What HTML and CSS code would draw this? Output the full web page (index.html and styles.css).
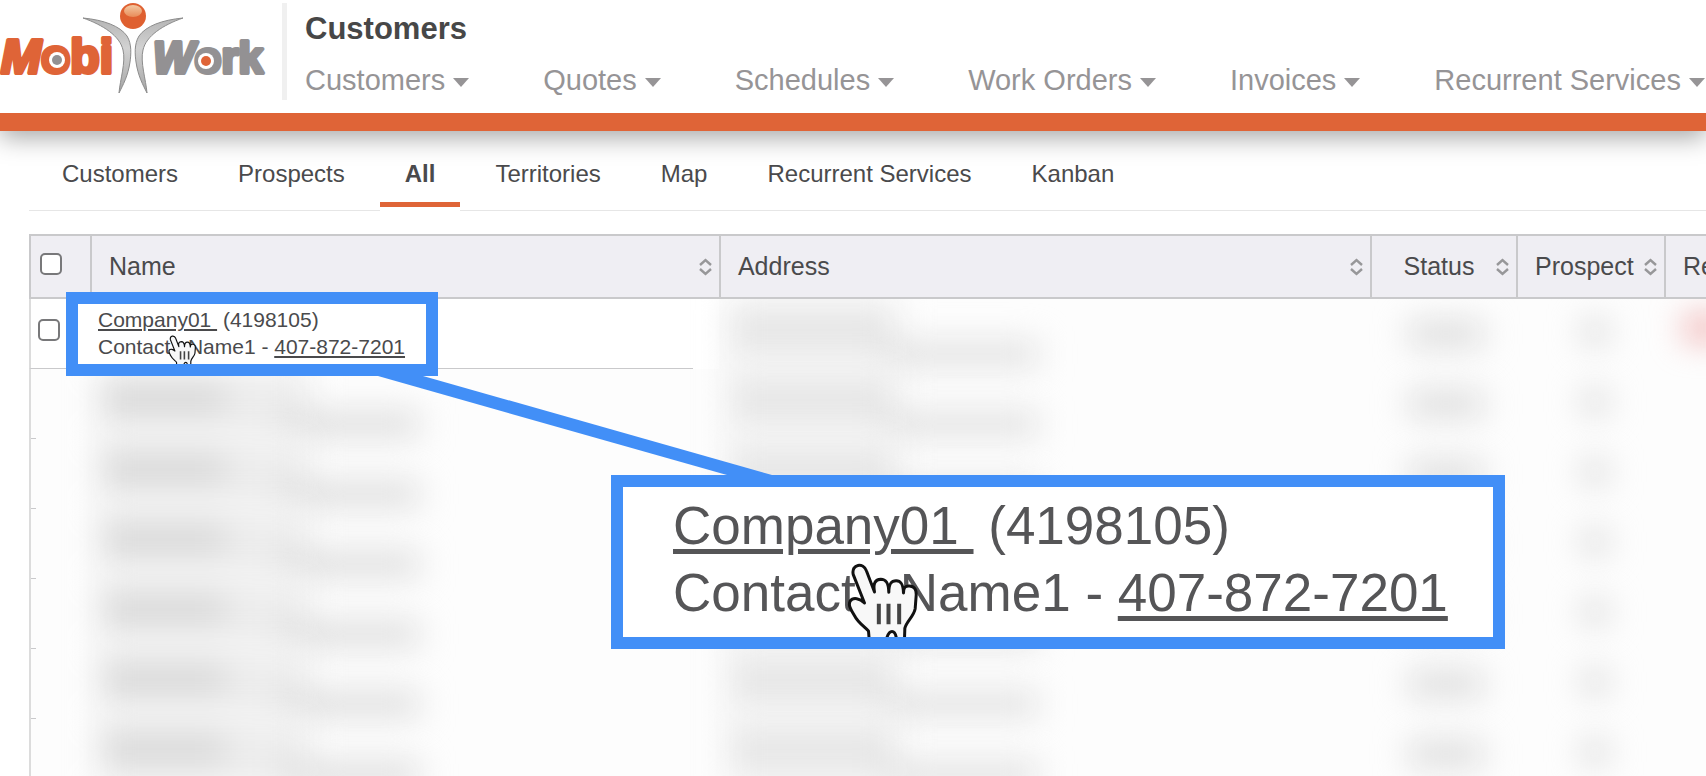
FILE: index.html
```html
<!DOCTYPE html>
<html lang="en">
<head>
    <meta charset="UTF-8">
    <meta name="viewport" content="width=device-width, initial-scale=1.0">
    <title>Customers</title>
    <link rel="stylesheet" href="styles.css">
</head>
<body>
    <svg class="defs" aria-hidden="true">
        <symbol id="sort" viewBox="0 0 13 18">
            <path d="M1 7 L6.5 2 L12 7 M1 11 L6.5 16 L12 11" fill="none" stroke="#979799" stroke-width="2.4"/>
        </symbol>
        <symbol id="hand" viewBox="52 68 212 225">
            <path d="M70 102 C64 70 101 66 110 92 L134 155 C129 128 136 118 153 117 C169 117 176 127 177 156 C177 130 184 121 199 121 C214 121 220 132 221 158 C221 142 226 136 239 137 C256 138 260 150 259 166 L256 205 C252 228 229 244 225 264 L224 296 L200 296 C196 266 178 266 170 296 L118 296 L116 272 C102 258 82 244 74 226 C64 208 54 196 61 182 C70 170 90 174 104 188 Z" fill="#f8f8f8" stroke="#111" stroke-width="9" stroke-linejoin="round"/>
            <path d="M147 190 V252 M176 190 V252 M208 190 V252" stroke="#444" stroke-width="12"/>
        </symbol>
    </svg>

    <header class="top">
        <a class="logo" href="#" aria-label="MobiWork">
            <svg width="268" height="100" viewBox="0 0 268 100">
                <defs>
                    <linearGradient id="silver" x1="0" y1="0" x2="0" y2="1">
                        <stop offset="0" stop-color="#b5b5b5"/>
                        <stop offset="0.4" stop-color="#d2d2d2"/>
                        <stop offset="1" stop-color="#a5a5a5"/>
                    </linearGradient>
                    <linearGradient id="shine" x1="0" y1="0" x2="0" y2="1">
                        <stop offset="0" stop-color="#f3c9a2"/>
                        <stop offset="1" stop-color="#e98b58"/>
                    </linearGradient>
                </defs>
                <text class="logo-mobi" x="1" y="73"><tspan class="slant">M</tspan>obi</text>
                <text class="logo-work" x="153" y="73"><tspan class="slant">W</tspan>ork</text>
                <circle cx="57" cy="60" r="8" fill="#fff"/>
                <circle cx="57" cy="60" r="5" fill="#939193"/>
                <circle cx="206" cy="61" r="8" fill="#fff"/>
                <circle cx="206" cy="61" r="5" fill="#df6437"/>
                <path d="M83 18 C104 20 120 26 127 36 C132 44 131 55 130 62 C128 76 123 85 119 93 C120 80 126 62 123 50 C120 36 103 25 83 18 Z" fill="url(#silver)" stroke="#8c8c8c"/>
                <path d="M183 18 C162 20 146 26 139 36 C134 44 135 55 136 62 C138 76 143 85 147 93 C146 80 140 62 143 50 C146 36 163 25 183 18 Z" fill="url(#silver)" stroke="#8c8c8c"/>
                <circle cx="133" cy="16" r="13" fill="#df6030"/>
                <ellipse cx="133" cy="11" rx="9" ry="6" fill="url(#shine)"/>
            </svg>
        </a>
        <div class="top-main">
            <h1>Customers</h1>
            <nav class="menu">
                <button type="button">Customers</button>
                <button type="button">Quotes</button>
                <button type="button">Schedules</button>
                <button type="button">Work Orders</button>
                <button type="button">Invoices</button>
                <button type="button">Recurrent Services</button>
            </nav>
        </div>
    </header>

    <main>
        <nav class="tabs">
            <a href="#">Customers</a>
            <a href="#">Prospects</a>
            <a href="#" class="active">All</a>
            <a href="#">Territories</a>
            <a href="#">Map</a>
            <a href="#">Recurrent Services</a>
            <a href="#">Kanban</a>
        </nav>

        <div class="list">
            <table>
                <colgroup>
                    <col class="col-check">
                    <col class="col-name">
                    <col>
                    <col class="col-status">
                    <col class="col-prospect">
                    <col class="col-last">
                </colgroup>
                <thead>
                    <tr>
                        <th class="check"><input type="checkbox" aria-label="Select all"></th>
                        <th><button type="button">Name<svg><use href="#sort"/></svg></button></th>
                        <th><button type="button">Address<svg><use href="#sort"/></svg></button></th>
                        <th><button type="button" class="centered"><span>Status</span><svg><use href="#sort"/></svg></button></th>
                        <th><button type="button">Prospect<svg><use href="#sort"/></svg></button></th>
                        <th><button type="button">Re</button></th>
                    </tr>
                </thead>
                <tbody>
                    <tr class="first">
                        <td class="check"><input type="checkbox" aria-label="Select Company01"></td>
                        <td class="name">
                            <div class="highlight">
                                <p><a href="#">Company01&nbsp;</a> (4198105)</p>
                                <p>Contact&nbsp;&nbsp; Name1 - <a href="#">407-872-7201</a></p>
                                <svg class="hand"><use href="#hand"/></svg>
                            </div>
                        </td>
                        <td><div class="hidden-text address"><i></i><i></i></div></td>
                        <td><div class="hidden-text status"><i></i></div></td>
                        <td><div class="hidden-text prospect"><i></i></div></td>
                        <td><div class="hidden-text alert"><i></i></div></td>
                    </tr>
                    <tr>
                        <td></td>
                        <td><div class="hidden-text customer"><i></i><i></i></div></td>
                        <td><div class="hidden-text address"><i></i><i></i></div></td>
                        <td><div class="hidden-text status"><i></i></div></td>
                        <td><div class="hidden-text prospect"><i></i></div></td>
                        <td></td>
                    </tr>
                    <tr>
                        <td></td>
                        <td><div class="hidden-text customer"><i></i><i></i></div></td>
                        <td><div class="hidden-text address"><i></i><i></i></div></td>
                        <td><div class="hidden-text status"><i></i></div></td>
                        <td><div class="hidden-text prospect"><i></i></div></td>
                        <td></td>
                    </tr>
                    <tr>
                        <td></td>
                        <td><div class="hidden-text customer"><i></i><i></i></div></td>
                        <td><div class="hidden-text address"><i></i><i></i></div></td>
                        <td><div class="hidden-text status"><i></i></div></td>
                        <td><div class="hidden-text prospect"><i></i></div></td>
                        <td></td>
                    </tr>
                    <tr>
                        <td></td>
                        <td><div class="hidden-text customer"><i></i><i></i></div></td>
                        <td><div class="hidden-text address"><i></i><i></i></div></td>
                        <td><div class="hidden-text status"><i></i></div></td>
                        <td><div class="hidden-text prospect"><i></i></div></td>
                        <td></td>
                    </tr>
                    <tr>
                        <td></td>
                        <td><div class="hidden-text customer"><i></i><i></i></div></td>
                        <td><div class="hidden-text address"><i></i><i></i></div></td>
                        <td><div class="hidden-text status"><i></i></div></td>
                        <td><div class="hidden-text prospect"><i></i></div></td>
                        <td></td>
                    </tr>
                    <tr>
                        <td></td>
                        <td><div class="hidden-text customer"><i></i><i></i></div></td>
                        <td><div class="hidden-text address"><i></i><i></i></div></td>
                        <td><div class="hidden-text status"><i></i></div></td>
                        <td><div class="hidden-text prospect"><i></i></div></td>
                        <td></td>
                    </tr>
                </tbody>
            </table>

            <!-- magnified copy of the first row -->
            <svg class="connector" width="394" height="99" viewBox="0 0 394 99">
                <polygon points="0,0 45,0 394,99 349,99" fill="#428ff7"/>
            </svg>
            <div class="zoomed">
                <p><a href="#">Company01&nbsp;</a> (4198105)</p>
                <p>Contact&nbsp;&nbsp; Name1 - <a href="#">407-872-7201</a></p>
                <svg class="hand"><use href="#hand"/></svg>
            </div>
        </div>
    </main>
</body>
</html>
```
FILE: styles.css
```css
* {
    margin: 0;
    padding: 0;
    box-sizing: border-box;
}

body {
    height: 100vh;
    overflow: hidden;
    background: #fff;
    color: #4a4a4c;
    font-family: "Liberation Sans", Arial, sans-serif;
}

button {
    border: none;
    background: none;
    color: inherit;
    font: inherit;
    cursor: pointer;
}

a {
    color: inherit;
}

.defs {
    display: block;
    width: 0;
    height: 0;
}

/* Header */
.top {
    position: relative;
    display: flex;
    padding-bottom: 13px;
    border-bottom: 18px solid #df6437;
    background: #fff;
    box-shadow: 0 6px 24px rgba(0, 0, 0, 0.36);
}

.logo {
    flex: 0 0 282px;
}

.logo svg {
    display: block;
}

.logo-mobi,
.logo-work {
    font-weight: bold;
    stroke-width: 4px;
    stroke-linejoin: round;
}

.logo-mobi {
    font-size: 48px;
    fill: #df6437;
    stroke: #df6437;
}

.logo-work {
    font-size: 44px;
    fill: #939193;
    stroke: #939193;
}

.slant {
    font-style: italic;
}

.top-main {
    margin-top: 3px;
    padding: 6px 0 0 18px;
    border-left: 5px solid #f0f0f0;
    white-space: nowrap;
}

h1 {
    margin-bottom: 11px;
    font-size: 31px;
    line-height: 40px;
    color: #474747;
}

.menu {
    display: flex;
    gap: 74px;
}

.menu button {
    display: flex;
    align-items: center;
    gap: 8px;
    font-size: 29px;
    line-height: 40px;
    color: #969496;
}

.menu button::after {
    content: "";
    margin-top: 4px;
    border: 8px solid transparent;
    border-top: 9px solid #969496;
    border-bottom: none;
}

/* Tabs */
.tabs {
    position: relative;
    z-index: -1;
    display: flex;
    gap: 10px;
    margin-left: 29px;
    padding: 14px 0 3px 8px;
    border-bottom: 1px solid #e6e6e6;
}

.tabs a {
    padding: 0 25px;
    border-bottom: 5px solid transparent;
    font-size: 24px;
    line-height: 57px;
    text-decoration: none;
    white-space: nowrap;
}

.tabs .active {
    border-color: #df6437;
    box-shadow: 0 4px 0 #fff;
    font-weight: bold;
}

/* Customer list */
.list {
    position: relative;
    margin: 23px 0 0 29px;
    overflow: hidden;
}

table {
    width: calc(100% + 120px);
    table-layout: fixed;
    border-collapse: separate;
    border-spacing: 0;
}

.col-check { width: 61px; }
.col-name { width: 35%; }
.col-status { width: 146px; }
.col-prospect { width: 148px; }
.col-last { width: 162px; }

th {
    position: relative;
    z-index: 1;
    height: 65px;
    border: 2px solid #c9c9cb;
    border-right: none;
    background: #efeef3;
    font-size: 25px;
    font-weight: normal;
    text-align: left;
}

th button {
    display: flex;
    align-items: center;
    justify-content: space-between;
    width: 100%;
    padding: 0 7px 0 17px;
}

th svg {
    flex: none;
    width: 13px;
    height: 18px;
}

th .centered {
    padding-left: 10px;
}

.centered span {
    flex: 1;
    text-align: center;
}

td {
    height: 70px;
    background: #fdfdfd;
    vertical-align: top;
}

td:first-child {
    border-left: 2px solid #dcdcdc;
    background: linear-gradient(#c9c9cb, #c9c9cb) left bottom / 5px 1px no-repeat #fdfdfd;
}

.first .check {
    border-bottom: 1px solid #c9c9cb;
    background: #fff;
}

.first .name {
    position: relative;
    background: linear-gradient(#c9c9cb, #c9c9cb) left bottom / calc(100% - 26px) 1px no-repeat #fff;
}

input[type="checkbox"] {
    display: block;
    width: 22px;
    height: 22px;
    appearance: none;
    border: 2px solid #78787a;
    border-radius: 5px;
    background: #fff;
}

th.check {
    padding: 0 0 5px 9px;
}

td.check {
    padding: 20px 0 0 7px;
}

/* Blurred private data */
.hidden-text {
    display: flex;
    flex-direction: column;
    height: 70px;
    padding: 16px 0 0 20px;
    filter: blur(16px);
}

.hidden-text i {
    height: 26px;
    background: #d6d6d6;
}

.customer {
    padding-left: 10px;
    background: linear-gradient(#ededed, #ededed) 10px 0 / 210px 100% no-repeat;
}

.customer i:first-child { width: 125px; }
.customer i:last-child { width: 140px; margin-left: 180px; background: #dedede; }

.address {
    padding-left: 10px;
    background: linear-gradient(#efefef, #efefef) 10px 0 / 170px 100% no-repeat;
}

.address i:first-child { width: 160px; background: #e4e4e4; }
.address i:last-child { width: 160px; margin-left: 150px; background: #e2e2e2; }

.status i { width: 76px; margin: 6px 0 0 18px; background: #dcdcdc; }
.prospect i { width: 26px; margin: 4px 0 0 46px; background: #dcdcdc; }
.alert i { width: 40px; background: #f0b4b4; }

/* Callouts */
.highlight,
.zoomed {
    position: absolute;
    border: 12px solid #428ff7;
    background: #fff;
    overflow: hidden;
    white-space: nowrap;
}

.highlight {
    z-index: 2;
    top: -7px;
    left: -24px;
    width: 372px;
    height: 84px;
    padding: 2px 20px;
    font-size: 21px;
    line-height: 27px;
}

.highlight a {
    text-decoration-thickness: 2px;
    text-underline-offset: 2px;
}

.zoomed {
    z-index: 3;
    top: 241px;
    left: 582px;
    width: 894px;
    height: 174px;
    padding: 5px 50px;
    font-size: 53px;
    line-height: 67px;
    color: #555557;
}

.zoomed a {
    text-decoration-thickness: 5px;
    text-underline-offset: 5px;
}

.hand {
    position: absolute;
}

.highlight .hand {
    top: 31px;
    left: 90px;
    width: 28px;
    height: 30px;
}

.zoomed .hand {
    top: 76px;
    left: 224px;
    width: 71px;
    height: 75px;
}

.connector {
    position: absolute;
    z-index: 2;
    top: 142px;
    left: 349px;
}
```
